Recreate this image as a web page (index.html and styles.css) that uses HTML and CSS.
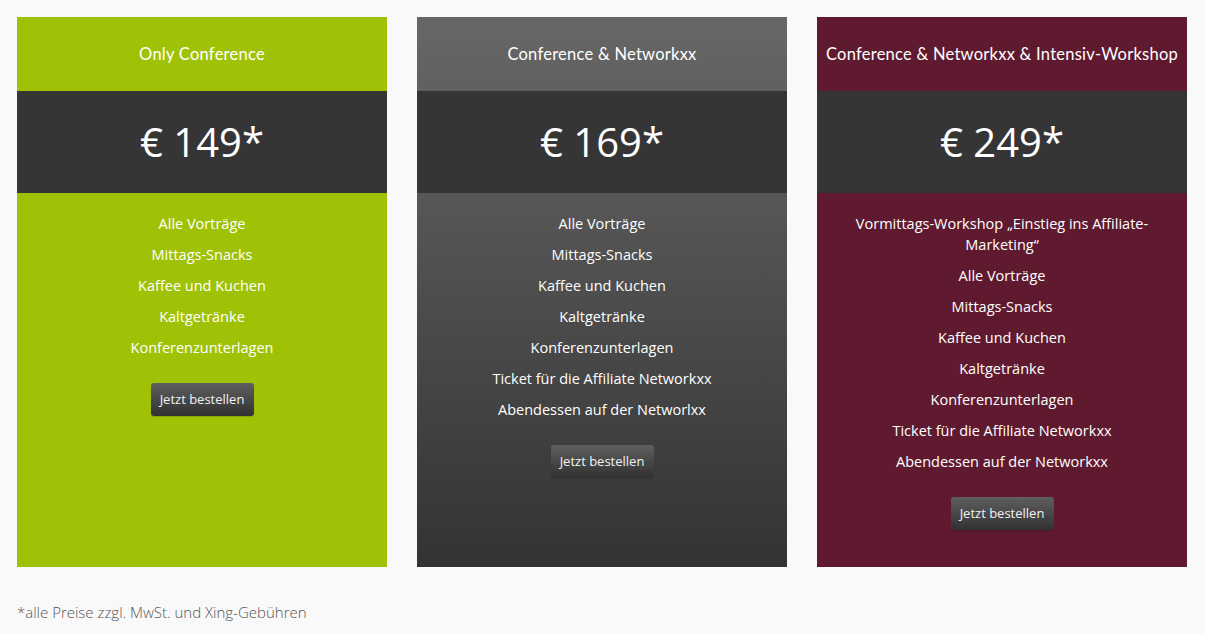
FILE: index.html
```html
<!DOCTYPE html>
<html lang="de">
<head>
<meta charset="utf-8">
<title>Preise</title>
<link rel="stylesheet" href="styles.css">
</head>
<body>
<div class="page">
  <div class="plans">
    <div class="plan plan-green">
      <div class="plan-head">Only Conference</div>
      <div class="plan-price">€ 149*</div>
      <div class="plan-body">
        <ul class="features">
          <li>Alle Vorträge</li>
          <li>Mittags-Snacks</li>
          <li>Kaffee und Kuchen</li>
          <li>Kaltgetränke</li>
          <li>Konferenzunterlagen</li>
        </ul>
        <a class="btn" href="#">Jetzt bestellen</a>
      </div>
    </div>
    <div class="plan plan-gray">
      <div class="plan-head">Conference &amp; Networkxx</div>
      <div class="plan-price">€ 169*</div>
      <div class="plan-body">
        <ul class="features">
          <li>Alle Vorträge</li>
          <li>Mittags-Snacks</li>
          <li>Kaffee und Kuchen</li>
          <li>Kaltgetränke</li>
          <li>Konferenzunterlagen</li>
          <li>Ticket für die Affiliate Networkxx</li>
          <li>Abendessen auf der Networlxx</li>
        </ul>
        <a class="btn" href="#">Jetzt bestellen</a>
      </div>
    </div>
    <div class="plan plan-red">
      <div class="plan-head">Conference &amp; Networkxx &amp; Intensiv-Workshop</div>
      <div class="plan-price">€ 249*</div>
      <div class="plan-body">
        <ul class="features">
          <li>Vormittags-Workshop „Einstieg ins Affiliate-Marketing“</li>
          <li>Alle Vorträge</li>
          <li>Mittags-Snacks</li>
          <li>Kaffee und Kuchen</li>
          <li>Kaltgetränke</li>
          <li>Konferenzunterlagen</li>
          <li>Ticket für die Affiliate Networkxx</li>
          <li>Abendessen auf der Networkxx</li>
        </ul>
        <a class="btn" href="#">Jetzt bestellen</a>
      </div>
    </div>
  </div>
  <p class="note">*alle Preise zzgl. MwSt. und Xing-Gebühren</p>
</div>
</body>
</html>
```
FILE: styles.css
```css
html, body {
  margin: 0;
  padding: 0;
  background: #f9f9f9;
}
body {
  font-family: "Open Sans", "Liberation Sans", sans-serif;
}
.page {
  padding: 17px 17px 0 17px;
}
.plans {
  display: flex;
  gap: 30px;
  height: 550px;
}
.plan {
  width: 370px;
  display: flex;
  flex-direction: column;
  color: #fff;
}
.plan-head {
  height: 74px;
  display: flex;
  align-items: center;
  justify-content: center;
  font-family: "Lato", "Open Sans", sans-serif;
  font-size: 16.5px;
  font-weight: 400;
  letter-spacing: 0.25px;
  white-space: nowrap;
}
.plan-price {
  height: 102px;
  background: #353535;
  display: flex;
  align-items: center;
  justify-content: center;
  font-size: 40px;
  font-weight: 400;
  padding-bottom: 2px;
  box-sizing: border-box;
}
.plan-body {
  flex: 1;
  display: flex;
  flex-direction: column;
  align-items: center;
  padding: 20px 30px 0;
}
.features {
  list-style: none;
  margin: 0;
  padding: 0;
  text-align: center;
  font-size: 14.5px;
  line-height: 21px;
}
.features li {
  margin-bottom: 10px;
}
.features li:last-child {
  margin-bottom: 0;
}
.btn {
  margin-top: 25px;
  display: block;
  width: 103px;
  height: 33px;
  box-sizing: border-box;
  line-height: 33px;
  text-align: center;
  font-size: 13px;
  color: #f2f2f2;
  text-decoration: none;
  border-radius: 3px;
  background: linear-gradient(#5f5f5f, #313131);
  box-shadow: 0 1px 1px rgba(0,0,0,0.15);
}
.plan-green .plan-head,
.plan-green .plan-body {
  background: #9fc207;
}
.plan-gray .plan-head {
  background: linear-gradient(#676767, #606060);
}
.plan-gray .plan-body {
  background: linear-gradient(#575757, #333333);
}
.plan-red .plan-head,
.plan-red .plan-body {
  background: #5f1a2f;
}
.note {
  margin: 37px 0 0;
  font-size: 15px;
  font-weight: 300;
  color: #555;
  line-height: 17px;
}
```
